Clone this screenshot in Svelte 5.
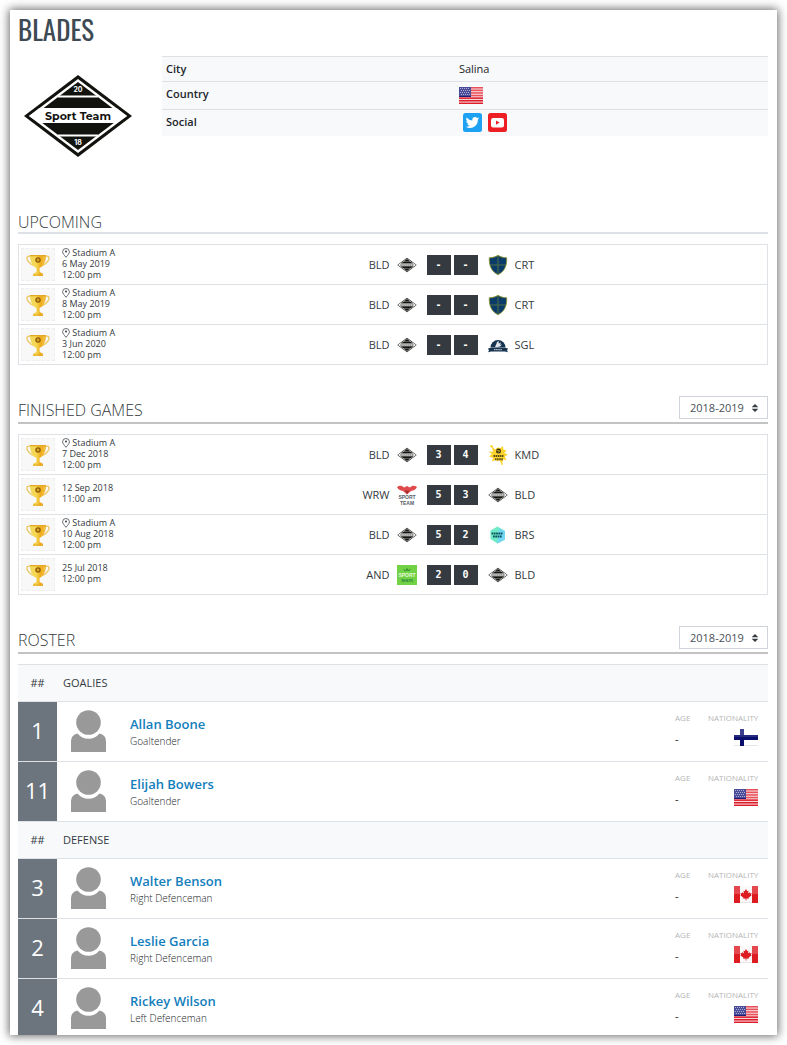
<script>
  const seasons = ['2018-2019'];

  const upcoming = [
    { place: 'Stadium A', date: '6 May 2019', time: '12:00 pm', home: 'BLD', away: 'CRT', hs: '-', as: '-' },
    { place: 'Stadium A', date: '8 May 2019', time: '12:00 pm', home: 'BLD', away: 'CRT', hs: '-', as: '-' },
    { place: 'Stadium A', date: '3 Jun 2020', time: '12:00 pm', home: 'BLD', away: 'SGL', hs: '-', as: '-' },
  ];

  const finished = [
    { place: 'Stadium A', date: '7 Dec 2018', time: '12:00 pm', home: 'BLD', away: 'KMD', hs: '3', as: '4' },
    { date: '12 Sep 2018', time: '11:00 am', home: 'WRW', away: 'BLD', hs: '5', as: '3' },
    { place: 'Stadium A', date: '10 Aug 2018', time: '12:00 pm', home: 'BLD', away: 'BRS', hs: '5', as: '2' },
    { date: '25 Jul 2018', time: '12:00 pm', home: 'AND', away: 'BLD', hs: '2', as: '0' },
  ];

  const roster = [
    {
      title: 'GOALIES',
      players: [
        { no: 1, name: 'Allan Boone', role: 'Goaltender', flag: 'fi' },
        { no: 11, name: 'Elijah Bowers', role: 'Goaltender', flag: 'us' },
      ],
    },
    {
      title: 'DEFENSE',
      players: [
        { no: 3, name: 'Walter Benson', role: 'Right Defenceman', flag: 'ca' },
        { no: 2, name: 'Leslie Garcia', role: 'Right Defenceman', flag: 'ca' },
        { no: 4, name: 'Rickey Wilson', role: 'Left Defenceman', flag: 'us' },
      ],
    },
  ];

  const stripes = [0, 1, 2, 3, 4, 5, 6];
  const starRows = [1, 3, 5, 7];
  const starCols = [1, 3, 5, 7, 9];
</script>

{#snippet flag(code)}
  <svg class="flag" viewBox="0 0 24 17" aria-hidden="true">
    {#if code === 'us'}
      <rect width="24" height="17" fill="#f7d5d8" />
      {#each stripes as i}
        <rect y={i * 2.6} width="24" height="1.5" fill={i < 4 ? '#e8505a' : '#dc1c28'} />
      {/each}
      <rect width="12" height="10" fill="#4a4c98" />
      {#each starRows as y}
        {#each starCols as x}
          <rect x={x + (y % 4 === 1 ? 0 : 1)} y={y} width="1" height="1" fill="#aeb0d8" />
        {/each}
      {/each}
      <rect y="9" width="12" height="1" fill="#1c1e7a" />
    {:else if code === 'fi'}
      <rect width="24" height="17" fill="#fff" />
      <path d="M0 16.5h24" stroke="#e6e6e6" />
      <rect x="6" width="4" height="17" fill="#0a0f6e" />
      <rect y="6" width="24" height="5" fill="#0a0f6e" />
      <rect x="6" width="4" height="6" fill="#3a3f8e" />
      <rect y="6" width="24" height="2" fill="#262b80" />
    {:else}
      <rect width="24" height="17" fill="#fafafa" />
      <path d="M6 16.5h12" stroke="#e6e6e6" />
      <rect width="6" height="17" fill="#dc1c20" />
      <rect x="18" width="6" height="17" fill="#dc1c20" />
      <rect width="6" height="8" fill="#e4484c" />
      <rect x="18" width="6" height="8" fill="#e4484c" />
      <path fill="#dc1c20" d="M12 3l1.3 2.200 1.200-.6-.4 3 1.500-1.400.5 1 1.500-.2-.6 1.700.7.5-3.200 2.600.3 1-2.400-.3v2h-.8v-2l-2.400.3.3-1-3.200-2.600.7-.5-.6-1.700 1.500.2.5-1 1.500 1.400-.4-3 1.200.6z" />
    {/if}
  </svg>
{/snippet}

{#snippet trophy()}
  <svg viewBox="0 0 24 24" width="24" height="24" aria-hidden="true">
    <defs>
      <linearGradient id="gold">
        <stop offset="0" stop-color="#f2d95c" />
        <stop offset=".4" stop-color="#f6d653" />
        <stop offset=".65" stop-color="#f0ad1c" />
        <stop offset="1" stop-color="#efc04a" />
      </linearGradient>
    </defs>
    <path d="M5 3.500C.8 2.200.2 5 2 8s3.600 4 6.500 4.600M19 3.500c4.200-1.300 4.800 1.500 3 4.500s-3.600 4-6.500 4.600" fill="none" stroke="#ecc765" stroke-width="1.400" />
    <path d="M4 2h16c.2 6.500-2.400 11.500-6.500 13l.2 4 3.300 1.800V23H7v-2.200l3.300-1.800.2-4C6.400 13.500 3.800 8.500 4 2z" fill="url(#gold)" />
    <path d="M4 2h16v1.200H4zM7 21.500h10v1H7z" fill="#e2a826" />
    <circle cx="12" cy="7" r="2.100" fill="#d9a020" stroke="#8a5a08" stroke-width="1.300" />
  </svg>
{/snippet}

{#snippet diamond()}
  <path d="M60 19 114 60 60 101 6 60z" fill="#12130f" />
  <path d="M60 23 109 60 60 97 11 60z" fill="#fff" />
  <path d="M60 26 105 60 60 94 15 60z" fill="#12130f" />
  <path d="M40 40.500h40M40 79.500h40" stroke="#fff" stroke-width="1.800" />
  <path d="M21.600 52h76.800L109 60l-10.600 7H21.600L11 60z" fill="#fff" />
{/snippet}

{#snippet team(code)}
  {#if code === 'BLD'}
    <svg class="crest" viewBox="4 4 112 112" aria-hidden="true">
      {@render diamond()}
      <path d="M22 60h76" stroke="#777" stroke-width="8" stroke-dasharray="9 2" />
    </svg>
  {:else if code === 'CRT'}
    <svg class="crest" viewBox="0 0 20 20" aria-hidden="true">
      <path d="M10 .3c2.500 1.800 5.500 2.300 8.700 2.500.4 7.500-2 13.700-8.700 16.900C3.300 16.500.9 10.300 1.300 2.800 4.500 2.600 7.500 2.100 10 .3z" fill="#0b3c69" stroke="#8c9430" stroke-width=".9" />
      <path d="M10 1v18M2 10h16" stroke="#577243" stroke-width=".9" />
    </svg>
  {:else if code === 'SGL'}
    <svg class="crest" viewBox="0 0 20 20" aria-hidden="true">
      <path d="M2.500 12.500a7.500 7.500 0 0 1 15 0z" fill="#16334f" />
      <path d="M7 12.500c.5-2.500 1.500-3 2-5.500l2-1-.5 2.500 2.500-1-1 2.200 2-.2-2 2z" fill="#dfe6ec" />
      <path d="M0 13.500l3-.8h14l3 .8-1 2 1 1.700-3-.7H3l-3 .7 1-1.700z" fill="#16334f" />
      <path d="M6 14.600h8" stroke="#b8c4ce" stroke-width="1.200" stroke-dasharray="1.500 .6" />
    </svg>
  {:else if code === 'KMD'}
    <svg class="crest" viewBox="0 0 20 20" aria-hidden="true">
      <path d="M3.500.5l3.500 4 2.500-2 3 .5 2.500-2 .3 3.500 3.200 1-2.300 2.500L20 9.500l-3.300 2 1.800 3.500-3.500-.5-1 5-2.500-4.200-2.500 1.200-1-1.500-4.500 1.500 1.700-3.500L1 11.500 4 9 .5 6.500l4.500.3z" fill="#fdd32e" />
      <circle cx="3.500" cy="1.300" r="1.200" fill="#fdd32e" />
      <circle cx="14" cy="19" r=".9" fill="#fdd32e" />
      <circle cx="10.500" cy="6" r="2.500" fill="#3a3214" />
      <path d="M8.500 5.500l3 .3M10 7.500l2.200-2" stroke="#fdd32e" stroke-width=".7" />
      <path d="M5.500 11h10M7 14.200h8" stroke="#5a4c18" stroke-width="2" stroke-dasharray="1.500 .6" />
    </svg>
  {:else if code === 'WRW'}
    <svg class="crest" viewBox="0 0 20 20" aria-hidden="true">
      <path d="M0 2c3-2 5-1.500 7 .5l3-1.500 3 1.500c2-2 4-2.500 7-.5-1 2.500-3 3.500-6 4l-4 3.500L6 6C3 5.500 1 4.500 0 2z" fill="#df4a4c" />
      <path d="M7.500 5.500h5L10 9z" fill="#a82c34" />
      <text x="10" y="14.200" text-anchor="middle" class="mark slate">SPORT</text>
      <text x="10" y="19.600" text-anchor="middle" class="mark slate">TEAM</text>
    </svg>
  {:else if code === 'BRS'}
    <svg class="crest" viewBox="0 0 20 20" aria-hidden="true">
      <path d="M9.500 1.500 17 6v8.500L9.500 18.500 2.500 14V5.500z" fill="#6eeac6" />
      <path d="M11 3.500l6 2.500v8.500l-7.500 4z" fill="#73d6f2" />
      <path d="M3.500 8.500h11M5 11.500h9" stroke="#0e5360" stroke-width="2.200" stroke-dasharray="1.800 .5" />
    </svg>
  {:else}
    <svg class="crest" viewBox="0 0 20 20" aria-hidden="true">
      <rect width="20" height="20" fill="#72d246" />
      <path d="M7 6l-.6-2.500L8.500 5 10 2.500 11.500 5l2.100-1.500L13 6z" fill="#459c34" />
      <text x="10" y="12.400" text-anchor="middle" class="mark light">SPORT</text>
      <text x="10" y="17.200" text-anchor="middle" class="mark green">team</text>
    </svg>
  {/if}
{/snippet}

{#snippet games(list)}
  <ul class="games">
    {#each list as g}
      <li>
        <div class="when">
          <span class="cup">{@render trophy()}</span>
          <div class="meta">
            {#if g.place}
              <div>
                <svg class="pin" viewBox="0 0 8 10" aria-hidden="true">
                  <path d="M4 9.300C2.200 7 .6 5.500.6 3.800a3.400 3.300 0 0 1 6.800 0C7.400 5.500 5.800 7 4 9.300z" fill="none" stroke="#444a50" stroke-width=".8" />
                  <circle cx="4" cy="3.600" r="1" fill="#343a40" />
                </svg>
                {g.place}
              </div>
            {/if}
            <div>{g.date}</div>
            <div>{g.time}</div>
          </div>
        </div>
        <div class="side home"><span>{g.home}</span>{@render team(g.home)}</div>
        <div class="score"><b>{g.hs}</b><b>{g.as}</b></div>
        <div class="side">{@render team(g.away)}<span>{g.away}</span></div>
      </li>
    {/each}
  </ul>
{/snippet}

{#snippet season(label)}
  <div class="season">
    <select aria-label={label}>
      {#each seasons as s}
        <option>{s}</option>
      {/each}
    </select>
    <svg viewBox="0 0 8 10" aria-hidden="true"><path d="M4 1l3.300 3.300H.7zM4 9L.7 5.700h6.600z" fill="#343a40" /></svg>
  </div>
{/snippet}

<main>
  <h1>BLADES</h1>

  <section class="profile">
    <svg class="logo" viewBox="0 0 120 120" role="img" aria-label="Blades logo">
      {@render diamond()}
      <text x="60" y="64" text-anchor="middle" class="logo-name">Sport Team</text>
      <text x="60" y="36" text-anchor="middle" class="logo-year">20</text>
      <text x="60" y="89" text-anchor="middle" class="logo-year">18</text>
    </svg>
    <table class="info">
      <tbody>
        <tr><th scope="row">City</th><td>Salina</td></tr>
        <tr><th scope="row">Country</th><td>{@render flag('us')}</td></tr>
        <tr>
          <th scope="row">Social</th>
          <td>
            <div class="social">
              <a href="#twitter" aria-label="Twitter">
                <svg viewBox="0 0 19 19">
                  <rect width="19" height="19" rx="2.500" fill="#1da1f2" />
                  <path transform="translate(2.500 2.500) scale(.58)" fill="#fff" d="M23.600 4.800a9.500 9.500 0 0 1-2.700.8 4.800 4.800 0 0 0 2.100-2.700 9.600 9.600 0 0 1-3 1.200 4.800 4.800 0 0 0-8.200 4.400A13.500 13.500 0 0 1 2 3.500a4.800 4.800 0 0 0 1.500 6.400 4.700 4.700 0 0 1-2.200-.6 4.800 4.800 0 0 0 3.800 4.700 4.800 4.800 0 0 1-2.100.1 4.800 4.800 0 0 0 4.400 3.300A9.600 9.600 0 0 1 .3 19.400a13.600 13.600 0 0 0 20.900-12.100 9.700 9.700 0 0 0 2.400-2.500z" />
                </svg>
              </a>
              <a href="#youtube" aria-label="YouTube">
                <svg viewBox="0 0 19 19">
                  <rect width="19" height="19" rx="2.500" fill="#ed1f24" />
                  <rect x="3" y="5" width="13" height="9.500" rx="2.200" fill="#fff" />
                  <path d="M8 7.500v4.200l3.700-2.100z" fill="#ed1f24" />
                </svg>
              </a>
            </div>
          </td>
        </tr>
      </tbody>
    </table>
  </section>

  <section>
    <header class="soft"><h2>UPCOMING</h2></header>
    {@render games(upcoming)}
  </section>

  <section>
    <header><h2>FINISHED GAMES</h2>{@render season('Games season')}</header>
    {@render games(finished)}
  </section>

  <section>
    <header><h2>ROSTER</h2>{@render season('Roster season')}</header>
    <table class="roster">
      {#each roster as group}
        <tbody>
          <tr class="group"><th scope="col">##</th><th scope="colgroup" colspan="4">{group.title}</th></tr>
          {#each group.players as p}
            <tr>
              <td class="no">{p.no}</td>
              <td class="photo">
                <svg viewBox="0 0 35 42" aria-hidden="true">
                  <circle cx="17.500" cy="12.500" r="12.300" fill="#999" />
                  <path d="M0 42V31q0-6 6.500-7.500 4.500 5.300 11 5.300t11-5.300Q35 25 35 31v11z" fill="#999" />
                </svg>
              </td>
              <td class="who"><a href="#player-{p.no}">{p.name}</a><span>{p.role}</span></td>
              <td class="age"><small>AGE</small><span>-</span></td>
              <td class="nation"><small>NATIONALITY</small>{@render flag(p.flag)}</td>
            </tr>
          {/each}
        </tbody>
      {/each}
    </table>
  </section>
</main>

<style>
  :global(body) {
    margin: 0;
    background: #fff;
  }
  main {
    display: flow-root;
    margin: 10px;
    padding: 0 9px 0 8px;
    background: #fff;
    box-shadow: 0 0 9px 1px rgba(0, 0, 0, 0.6);
    color: #343a40;
    font: 11px/16px 'Open Sans', sans-serif;
  }
  svg {
    display: block;
  }
  h1 {
    margin: 0;
    padding-bottom: 8px;
    font: 400 27px/38px Oswald, 'Roboto Condensed', 'Open Sans Condensed', 'Liberation Sans Narrow', sans-serif;
    color: #3d4a54;
  }
  table {
    border-collapse: collapse;
    width: 100%;
  }
  .profile {
    display: flex;
    align-items: flex-start;
    gap: 24px;
    margin-bottom: 38px;
  }
  .logo {
    flex: none;
    width: 120px;
    height: 120px;
  }
  .logo-name {
    font: 700 11px Montserrat, 'DejaVu Sans', sans-serif;
    fill: #12130f;
  }
  .logo-year {
    font: 700 7px Inter, sans-serif;
    fill: #fff;
  }
  .info {
    background: #f8f9fb;
    color: #212529;
  }
  .info tr {
    border-top: 1px solid #dee2e6;
  }
  .info th {
    width: 48%;
    padding: 4px;
    text-align: left;
    vertical-align: top;
    font-weight: 600;
  }
  .info td {
    padding: 4px 6px;
  }
  .flag {
    width: 24px;
    height: 17px;
  }
  .info .flag {
    margin: 1px 0;
  }
  .social {
    display: flex;
    gap: 6px;
    padding-left: 4px;
    margin-top: -1px;
  }
  .social svg {
    width: 19px;
    height: 19px;
  }
  header {
    display: flex;
    align-items: flex-end;
    justify-content: space-between;
    padding-bottom: 3px;
    margin-bottom: 10px;
    border-bottom: 2px solid #c3c3c3;
  }
  .soft {
    padding-bottom: 1px;
    border-color: #dee2e6;
  }
  h2 {
    margin: 0;
    font-size: 16px;
    line-height: 17px;
    font-weight: 300;
  }
  .season {
    position: relative;
  }
  .season select {
    appearance: none;
    display: block;
    height: 23px;
    padding: 0 23px 0 10px;
    border: 1px solid #ced4da;
    border-radius: 0;
    background: #fff;
    color: #495057;
    font: 11px 'Open Sans', sans-serif;
  }
  .season svg {
    position: absolute;
    right: 9px;
    top: 7px;
    width: 8px;
    height: 10px;
    pointer-events: none;
  }
  .games {
    list-style: none;
    margin: 0 0 31px;
    padding: 0;
    border: 1px solid #dee2e6;
  }
  .games li {
    display: grid;
    grid-template-columns: 108px 1fr auto 1fr;
    align-items: center;
    column-gap: 10px;
    height: 39px;
  }
  .games li + li {
    border-top: 1px solid #dee2e6;
  }
  .when {
    display: flex;
    align-items: center;
    gap: 7px;
    padding-left: 2px;
  }
  .cup {
    display: grid;
    place-items: center;
    width: 32px;
    height: 31px;
    border: 1px dashed #eee;
    background: #f8f8f8;
  }
  .meta {
    padding-bottom: 3px;
    font-size: 9px;
    line-height: 11px;
  }
  .pin {
    display: inline-block;
    width: 8px;
    height: 10px;
    vertical-align: -2px;
  }
  .side {
    display: flex;
    align-items: center;
    gap: 7px;
  }
  .home {
    justify-content: flex-end;
  }
  .crest {
    width: 20px;
    height: 20px;
  }
  .mark {
    font: 700 5px 'Liberation Sans', sans-serif;
  }
  .slate {
    fill: #56606a;
  }
  .light {
    fill: #e4f8da;
  }
  .green {
    fill: #2d8a3a;
  }
  .score {
    display: flex;
    gap: 3px;
  }
  .score b {
    width: 24px;
    background: #343a40;
    color: #fff;
    text-align: center;
    font: 700 10px/20px 'DejaVu Sans Mono', monospace;
  }
  .roster tr {
    border-top: 1px solid #dee2e6;
  }
  .roster .group {
    background: #f8f9fb;
  }
  .roster th {
    height: 36px;
    padding: 0 6px;
    text-align: left;
    font-weight: 400;
  }
  .roster th:first-child {
    text-align: center;
  }
  .roster td {
    padding: 0;
    height: 59px;
    vertical-align: top;
  }
  .roster tbody:last-child tr:last-child td {
    height: 56px;
  }
  .roster .no {
    width: 39px;
    background: #6c757d;
    color: #fff;
    text-align: center;
    font-size: 22px;
    line-height: 56px;
  }
  .roster .photo {
    box-sizing: border-box;
    width: 73px;
    padding: 8px 0 0 14px;
  }
  .photo svg {
    width: 35px;
    height: 42px;
  }
  .who a {
    display: block;
    padding-top: 13px;
    font-size: 13px;
    line-height: 18px;
    font-weight: 600;
    color: #127ebc;
    text-decoration: none;
  }
  .who span {
    display: block;
    font-size: 10px;
    line-height: 16px;
    font-weight: 300;
    color: #212529;
  }
  .roster small {
    display: block;
    padding-top: 10px;
    font-size: 8px;
    line-height: 12px;
    color: #b5b5b5;
  }
  .roster .age {
    width: 33px;
  }
  .age span {
    display: block;
    line-height: 30px;
    color: #212529;
  }
  .roster .nation {
    width: 51px;
    padding-right: 9px;
  }
  .nation .flag {
    margin: 5px 1px 0 auto;
  }
</style>
